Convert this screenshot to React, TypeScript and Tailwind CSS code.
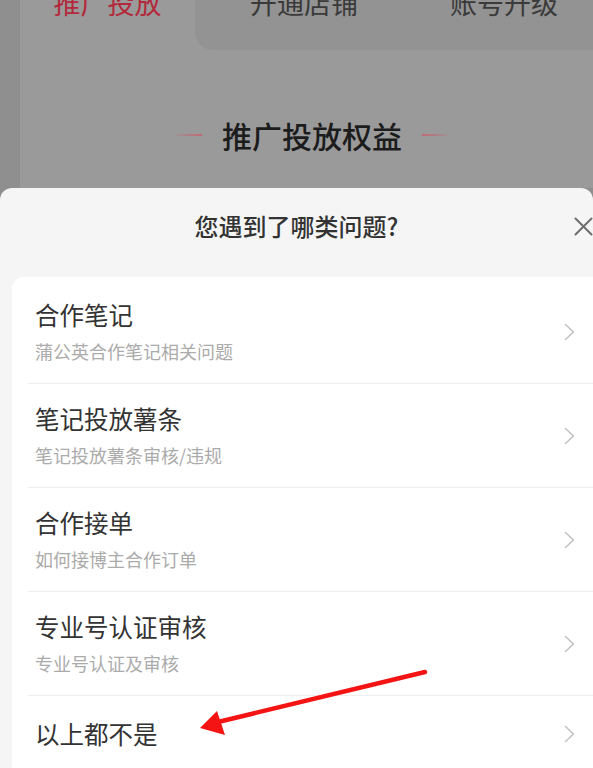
import { ChevronRight } from "lucide-react";

const font = { fontFamily: '"Noto Sans CJK SC", "Noto Sans", sans-serif' };

const items = [
  { title: "合作笔记", desc: "蒲公英合作笔记相关问题" },
  { title: "笔记投放薯条", desc: "笔记投放薯条审核/违规" },
  { title: "合作接单", desc: "如何接博主合作订单" },
  { title: "专业号认证审核", desc: "专业号认证及审核" },
];

function Chevron() {
  return (
    <svg width="11" height="18" viewBox="0 0 11 18" fill="none" className="shrink-0">
      <polyline points="1.5,1.5 9.5,9 1.5,16.5" stroke="#c2c2c2" strokeWidth="1.6" strokeLinecap="round" strokeLinejoin="round" />
    </svg>
  );
}

export default function App() {
  return (
    <div className="relative w-[593px] h-[768px] overflow-hidden bg-[#8f8f8f]" style={font}>
      {/* dimmed page behind the sheet */}
      <div className="flex h-[188px]">
        <div className="w-[20px] shrink-0" />
        <div className="flex-1 flex flex-col bg-[#9a9a9a]">
          <div className="flex h-[50px] shrink-0">
            <div className="w-[175px] shrink-0 flex justify-center">
              <span className="-mt-[11px] text-[27px] leading-[28px] text-[#b3283a]">推广投放</span>
            </div>
            <div className="flex-1 flex bg-[#939393] rounded-bl-[18px] pl-[9px]">
              <div className="w-[200px] shrink-0 flex justify-center">
                <span className="-mt-[11px] text-[27px] leading-[28px] text-[#3a3a3a]">开通店铺</span>
              </div>
              <div className="w-[200px] shrink-0 flex justify-center">
                <span className="-mt-[11px] text-[27px] leading-[28px] text-[#3a3a3a]">账号升级</span>
              </div>
            </div>
          </div>
          <div className="flex items-center justify-center gap-[20px] pt-[67px]">
            <div className="w-[30px] h-[2px] bg-gradient-to-l from-[#c06878] to-transparent" />
            <span className="text-[30px] leading-[36px] font-medium text-[#1c1c1c]">推广投放权益</span>
            <div className="w-[30px] h-[2px] bg-gradient-to-r from-[#c06878] to-transparent" />
          </div>
        </div>
      </div>

      {/* bottom sheet */}
      <div className="relative h-[580px] bg-[#f5f5f5] rounded-t-[12px]">
        <div className="relative h-[89px] pt-[22px] flex justify-center">
          <span className="text-[24px] leading-[32px] font-medium text-[#333]">您遇到了哪类问题?</span>
          <svg width="19" height="19" viewBox="0 0 19 19" className="absolute right-0 top-[29px]">
            <path d="M1.5 1.5 L17.5 17.5 M17.5 1.5 L1.5 17.5" stroke="#6e6e6e" strokeWidth="2" strokeLinecap="round" />
          </svg>
        </div>

        <div className="ml-[12px] h-[600px] bg-white rounded-tl-[12px] pt-[3px] pl-[16px]">
          {items.map((it) => (
            <div key={it.title} className="h-[104px] flex items-center justify-between border-b border-[#eeeeee] pl-[7px] pr-[18px]">
              <div className="flex flex-col gap-[11px]">
                <span className="text-[24.5px] leading-[28px] text-[#333]">{it.title}</span>
                <span className="text-[18px] leading-[22px] text-[#ababab]">{it.desc}</span>
              </div>
              <Chevron />
            </div>
          ))}
          <div className="h-[76px] flex items-center justify-between pl-[7px] pr-[18px]">
            <span className="text-[24.5px] leading-[28px] text-[#333]">以上都不是</span>
            <Chevron />
          </div>
        </div>
      </div>

      {/* annotation arrow */}
      <svg className="absolute left-0 top-0 pointer-events-none" width="593" height="768" viewBox="0 0 593 768">
        <line x1="425" y1="672" x2="218" y2="722" stroke="#f51414" strokeWidth="4.5" strokeLinecap="round" />
        <polygon points="200,728 217,711 225,735" fill="#f51414" />
      </svg>
    </div>
  );
}
